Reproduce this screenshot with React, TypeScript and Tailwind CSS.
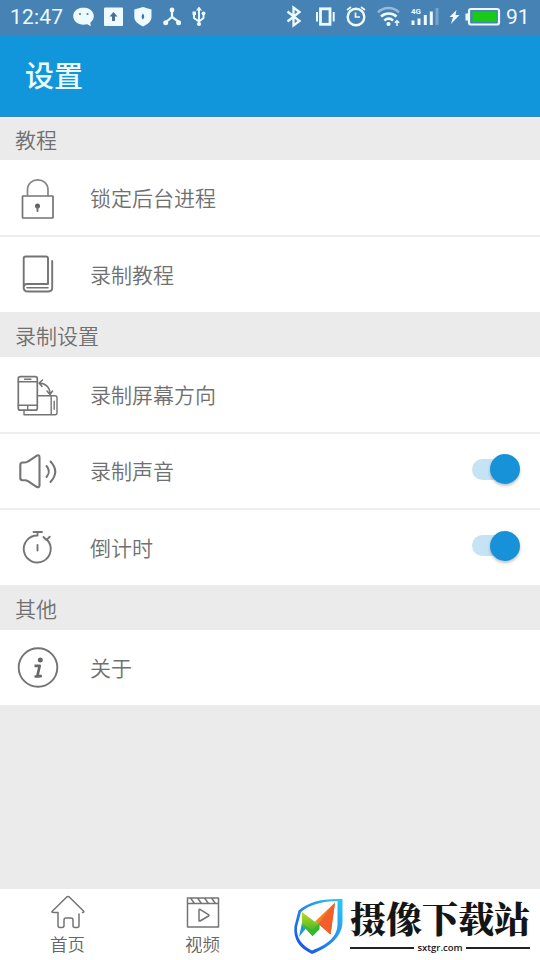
import type { ReactNode } from "react";

const stroke = { fill: "none", stroke: "#747474", strokeWidth: 1.7, strokeLinecap: "round", strokeLinejoin: "round" } as const;

function StatusBar() {
  return (
    <div className="flex h-[35px] shrink-0 items-center bg-[#4682b4] font-['Roboto',sans-serif] text-[21px] text-[#edfaff]">
      <span className="ml-[10px] w-[60px] leading-[33px] tracking-[.2px]">12:47</span>
      <svg width="140" height="35" viewBox="70 0 140 35" fill="#edfaff">
        <path d="M83.500 7.500c-5.800 0-10.300 3.700-10.300 8.600s4.500 8.700 10.300 8.700c1.400 0 2.500-.2 3.700-.5l3.600 2-.5-3.600c2.200-1.600 3.500-4 3.500-6.600 0-4.900-4.500-8.600-10.300-8.600z" />
        <circle cx="80" cy="14" r="1.100" fill="#4682b4" />
        <circle cx="87.500" cy="14" r="1.100" fill="#4682b4" />
        <rect x="104" y="7.500" width="19" height="18.500" rx="1" />
        <path d="M113.500 12l4 4.500H115v4.500h-3v-4.500h-2.500z" fill="#4a7091" />
        <path d="M143 7l8.500 2.500v7.500c0 4-3.500 7.200-8.500 9.500-5-2.300-8.700-5.500-8.700-9.500V9.500z" />
        <path d="M143 13.500c1.600 2 1.600 4.500-.2 6-1.600-1.500-1.600-4 .2-6z" fill="#4a7091" />
        <path d="M172 10v7l-6 5M172 17l7 5" fill="none" stroke="#edfaff" strokeWidth="2.200" />
        <circle cx="172" cy="10" r="2.400" /><circle cx="165.700" cy="22.700" r="2.500" /><circle cx="178.600" cy="22.700" r="2.500" />
        <path d="M199 9v15M194 14v4l5 3.500 4.500-3.500v-4" fill="none" stroke="#edfaff" strokeWidth="1.900" />
        <path d="M199 6.500l3 4h-6z" /><circle cx="199" cy="24" r="2.100" /><rect x="192.500" y="11.500" width="3.500" height="3.500" /><circle cx="203.500" cy="13.300" r="1.900" />
      </svg>
      <svg className="ml-auto" width="224" height="35" viewBox="280 0 224 35" fill="none" stroke="#edfaff" strokeWidth="2">
        <path d="M287.500 11.500l12 9.500-6 4.500V7.500l6 4.500-12 9.500" strokeWidth="2.300" />
        <rect x="320.500" y="8.800" width="9.500" height="15.500" strokeWidth="2.800" />
        <path d="M317 12v9.500M333.700 12v9.500" strokeWidth="2" />
        <circle cx="356" cy="17" r="8.300" strokeWidth="2.400" />
        <path d="M355.500 12.500V17h4.500M347 10l4-3M361 7l4 3" strokeWidth="1.700" />
        <path d="M378 12.300c6-5.600 15-5.600 21 0" stroke="#94bbd8" strokeWidth="2.500" />
        <path d="M381 16.500c4.500-4 11-4 15.500 0M384.300 20.500c2.800-2.300 6-2.300 8.800 0" strokeWidth="2.600" />
        <circle cx="388.500" cy="24" r="2.100" fill="#edfaff" stroke="none" />
        <path d="M397 26v-5M394.800 22.700l2.200-2 2.200 2" strokeWidth="1.500" />
        <path d="M413 20.500V25M419 18.500V25M425.300 15V25M431.300 11.500V25" strokeWidth="3" />
        <path d="M437 8V25" stroke="#78a5cb" strokeWidth="3" />
        <text x="411" y="14" fill="#edfaff" stroke="none" fontSize="8" fontWeight="700">4G</text>
        <path d="M456.500 10l-7 7h3.500L451 24l8.500-9h-4z" fill="#edfaff" stroke="none" />
        <rect x="469" y="9" width="30" height="15.500" rx="2" strokeWidth="2.200" />
        <path d="M466.700 13.500v7" strokeWidth="2.500" />
        <rect x="472.500" y="11.500" width="24" height="10.500" fill="#18c915" stroke="none" />
      </svg>
      <span className="mr-[10px] w-[26px] pl-[2px] leading-[33px]">91</span>
    </div>
  );
}

function Section({ children, size = "h-[45px] pt-[2px]" }: { children: string; size?: string }) {
  return <h2 className={`flex shrink-0 items-center bg-[#ebebeb] pl-[15px] text-[21px] font-[350] text-[#707070] ${size}`}>{children}</h2>;
}

function Toggle() {
  return (
    <button aria-label="开关" className="relative mr-5 mb-[4px] ml-auto h-[30px] w-12">
      <span className="absolute top-[4.5px] left-0 h-[21px] w-9 rounded-full bg-[#c5e3f4]" />
      <span className="absolute top-0 right-0 size-[30px] rounded-full bg-[#1792d8] shadow-[0_2px_3px_#0000003d]" />
    </button>
  );
}

function Row({ icon, label, size = "h-[75px]", toggle }: { icon: ReactNode; label: string; size?: string; toggle?: boolean }) {
  return (
    <div className={`flex shrink-0 items-center border-[#eeeeee] bg-white ${size}`}>
      <svg className="mr-[15px] shrink-0" width="75" height="75" viewBox="0 0 75 75" {...stroke}>{icon}</svg>
      <span className="text-[21px] font-[350] text-[#707070]">{label}</span>
      {toggle && <Toggle />}
    </div>
  );
}

const lock = (
  <>
    <rect x="22.500" y="35" width="30.500" height="22" rx=".5" />
    <path d="M27.500 35V29c0-13.500 20.500-13.500 20.500 0V35" stroke="#858585" />
    <circle cx="37.500" cy="45" r="2.500" fill="#606060" stroke="none" />
    <path d="M37.500 46v4" strokeWidth="2" />
  </>
);
const book = (
  <>
    <path d="M23.700 51.500V21.500q0-2 2-2H46q2 0 2 2V47H27q-3.300 0-3.300 3.200 0 4.300 4.300 4.300h20.500q3.700 0 3.700-3.700V24" strokeWidth="1.900" />
    <path d="M27 50.700h21" strokeWidth="1.500" />
  </>
);
const rotate = (
  <>
    <rect x="18.300" y="18.700" width="19" height="33.500" rx="2" />
    <path d="M18.300 23.700h19M18.300 47.200h19M24.500 21.200h6.500M27.700 48.200v3M24 52.200v4.500h31q2 0 2-2V39.700q0-2-2-2H38.500M51.200 37.700v19M54.200 43.200v8" strokeWidth="1.400" />
    <path d="M39 25c6 0 11 4 11 11M42.500 22L39 25l3 3.500M47 33l3 3.500 2.500-3.500" strokeWidth="1.500" />
  </>
);
const speaker = (
  <>
    <path d="M20.300 31q0-2.500 2.500-2.500h2q2 0 3.500-1.200L36.500 21.800q3-1.500 3 1.500v28q0 3-3 1.500L28 47.200q-1.500-1-3-1h-2.500q-2.200 0-2.200-2.200z" strokeWidth="2.100" />
    <path d="M46.500 32q4.800 5.500 0 11M50.500 27.500q9.500 10 0 20.500" strokeWidth="2" />
  </>
);
const timer = (
  <path d="M47.300 30A13.500 13.500 0 1 1 37.500 25.500V22.500M33.500 22h8.500M43.500 27l3 3 3.300-3.300M37.500 35v5.500" strokeWidth="1.900" />
);
const info = (
  <>
    <circle cx="38" cy="37.500" r="19.300" strokeWidth="1.900" />
    <circle cx="40.300" cy="30" r="2.500" fill="#686868" stroke="none" />
    <path d="M34.500 35.800h5.200L37.600 45q-.4 2 4.200.7M34.500 46.500h5" strokeWidth="2.700" stroke="#686868" strokeLinecap="butt" />
  </>
);

function BottomBar() {
  return (
    <nav className="flex h-[71px] shrink-0 items-start bg-white text-[17.500px] font-[350] text-[#656565]">
      <button className="flex w-[135px] flex-col items-center">
        <svg width="40" height="42" viewBox="47.500 889 40 42" {...stroke} strokeWidth={1.500}>
          <path d="M78.500 914v11.500q0 2-2 2h-2q-2 0-2-2V920q0-2-2-2h-5q-2 0-2 2v5.500q0 2-2 2h-2q-2 0-2-2v-13h-4.500q-2.500 0-1-1.500L66 897.200q1.500-1.200 3 0l14 13.800q1 1.500-1 1.500" />
        </svg>
        <span className="leading-[26px]">首页</span>
      </button>
      <button className="flex w-[135px] flex-col items-center">
        <svg width="40" height="42" viewBox="182.500 889 40 42" {...stroke} strokeWidth={1.500}>
          <path d="M187 898h31v29h-31zM187 903.500h31M190 898l4 5.500M197 898l4 5.500M204 898l4 5.500M211 898l4 5.500M198.500 910q0-1 1-.7l8.500 5.300q1 .8 0 1.400l-8.500 5q-1 .4-1-.6z" />
        </svg>
        <span className="leading-[26px]">视频</span>
      </button>
      <div className="ml-[22px] flex pt-[7px]">
        <svg width="56" height="60" viewBox="292 896 56 60">
          <defs>
            <linearGradient id="shield" x1="0" y1="1" x2="1" y2="0"><stop stopColor="#1746e8" /><stop offset=".5" stopColor="#218bef" /><stop offset="1" stopColor="#29cafa" /></linearGradient>
            <linearGradient id="flame" x1="0" y1="0" x2="1" y2="1"><stop stopColor="#ffb02c" /><stop offset="1" stopColor="#e43819" /></linearGradient>
            <linearGradient id="leaf" x1="0" y1="0" x2="0" y2="1"><stop stopColor="#c5dc25" /><stop offset="1" stopColor="#22ac2b" /></linearGradient>
          </defs>
          <path fillRule="evenodd" fill="url(#shield)" d="M342.500 899v22c0 16-13 26-30.500 33-13-6-19-15-17.500-28l4-15.500c10-8.500 22-12 44-11.500zM337.500 901c-16 0-28 4-36.500 11l-4 15c-1 11 5 18.500 15 23.500 15-6 25.500-13 25.500-27z" />
          <path fill="#1c98d3" d="M303 918l4 9-8 10z" />
          <path fill="url(#flame)" d="M315 921.500l20-19-4.500 32-12-10.500z" />
          <path fill="#f25f2a" d="M335 902.500l-4.500 32-12-10.500z" />
          <path fill="url(#leaf)" d="M302 912l12.500 9.500 5 2.500-.5 5-6.500 7-10.500-11z" />
          <path fill="#35b92d" d="M302 924l10.500 6 7-7v6.500l-7 6.500z" />
        </svg>
        <div className="ml-[2px] w-[180px] text-[#151515]">
          <div className="h-[47px] font-['Noto_Serif_CJK_SC','Noto_Sans_CJK_SC',serif] text-[36px] leading-[43px] font-black whitespace-nowrap">摄像下载站</div>
          <div className="flex h-[10px] items-center gap-[3px] font-['Open_Sans',sans-serif] text-[9.500px] leading-[10px] font-semibold">
            <span className="h-[2px] flex-1 bg-[#222]" /><span>sxtgr.com</span><span className="h-[2px] flex-1 bg-[#222]" />
          </div>
        </div>
      </div>
    </nav>
  );
}

export default function App() {
  return (
    <main className="flex h-[960px] w-[540px] flex-col overflow-hidden bg-[#ebebeb] font-['Noto_Sans_CJK_SC',sans-serif]">
      <StatusBar />
      <header className="flex h-[82px] shrink-0 items-center border-b border-[#3488ba] bg-[#1296db] pb-px pl-[25px] text-[29px] font-medium text-[#edfdff]"><h1>设置</h1></header>
      <Section size="h-[43px] pt-[2px]">教程</Section>
      <Row icon={lock} label="锁定后台进程" size="h-[77px] border-b-2 pt-px" />
      <Row icon={book} label="录制教程" />
      <Section>录制设置</Section>
      <Row icon={rotate} label="录制屏幕方向" size="h-[77px] border-b-2 pt-px" />
      <Row icon={speaker} label="录制声音" size="h-[76px] border-b-2" toggle />
      <Row icon={timer} label="倒计时" toggle />
      <Section>其他</Section>
      <Row icon={info} label="关于" />
      <div className="flex-1" />
      <BottomBar />
    </main>
  );
}
